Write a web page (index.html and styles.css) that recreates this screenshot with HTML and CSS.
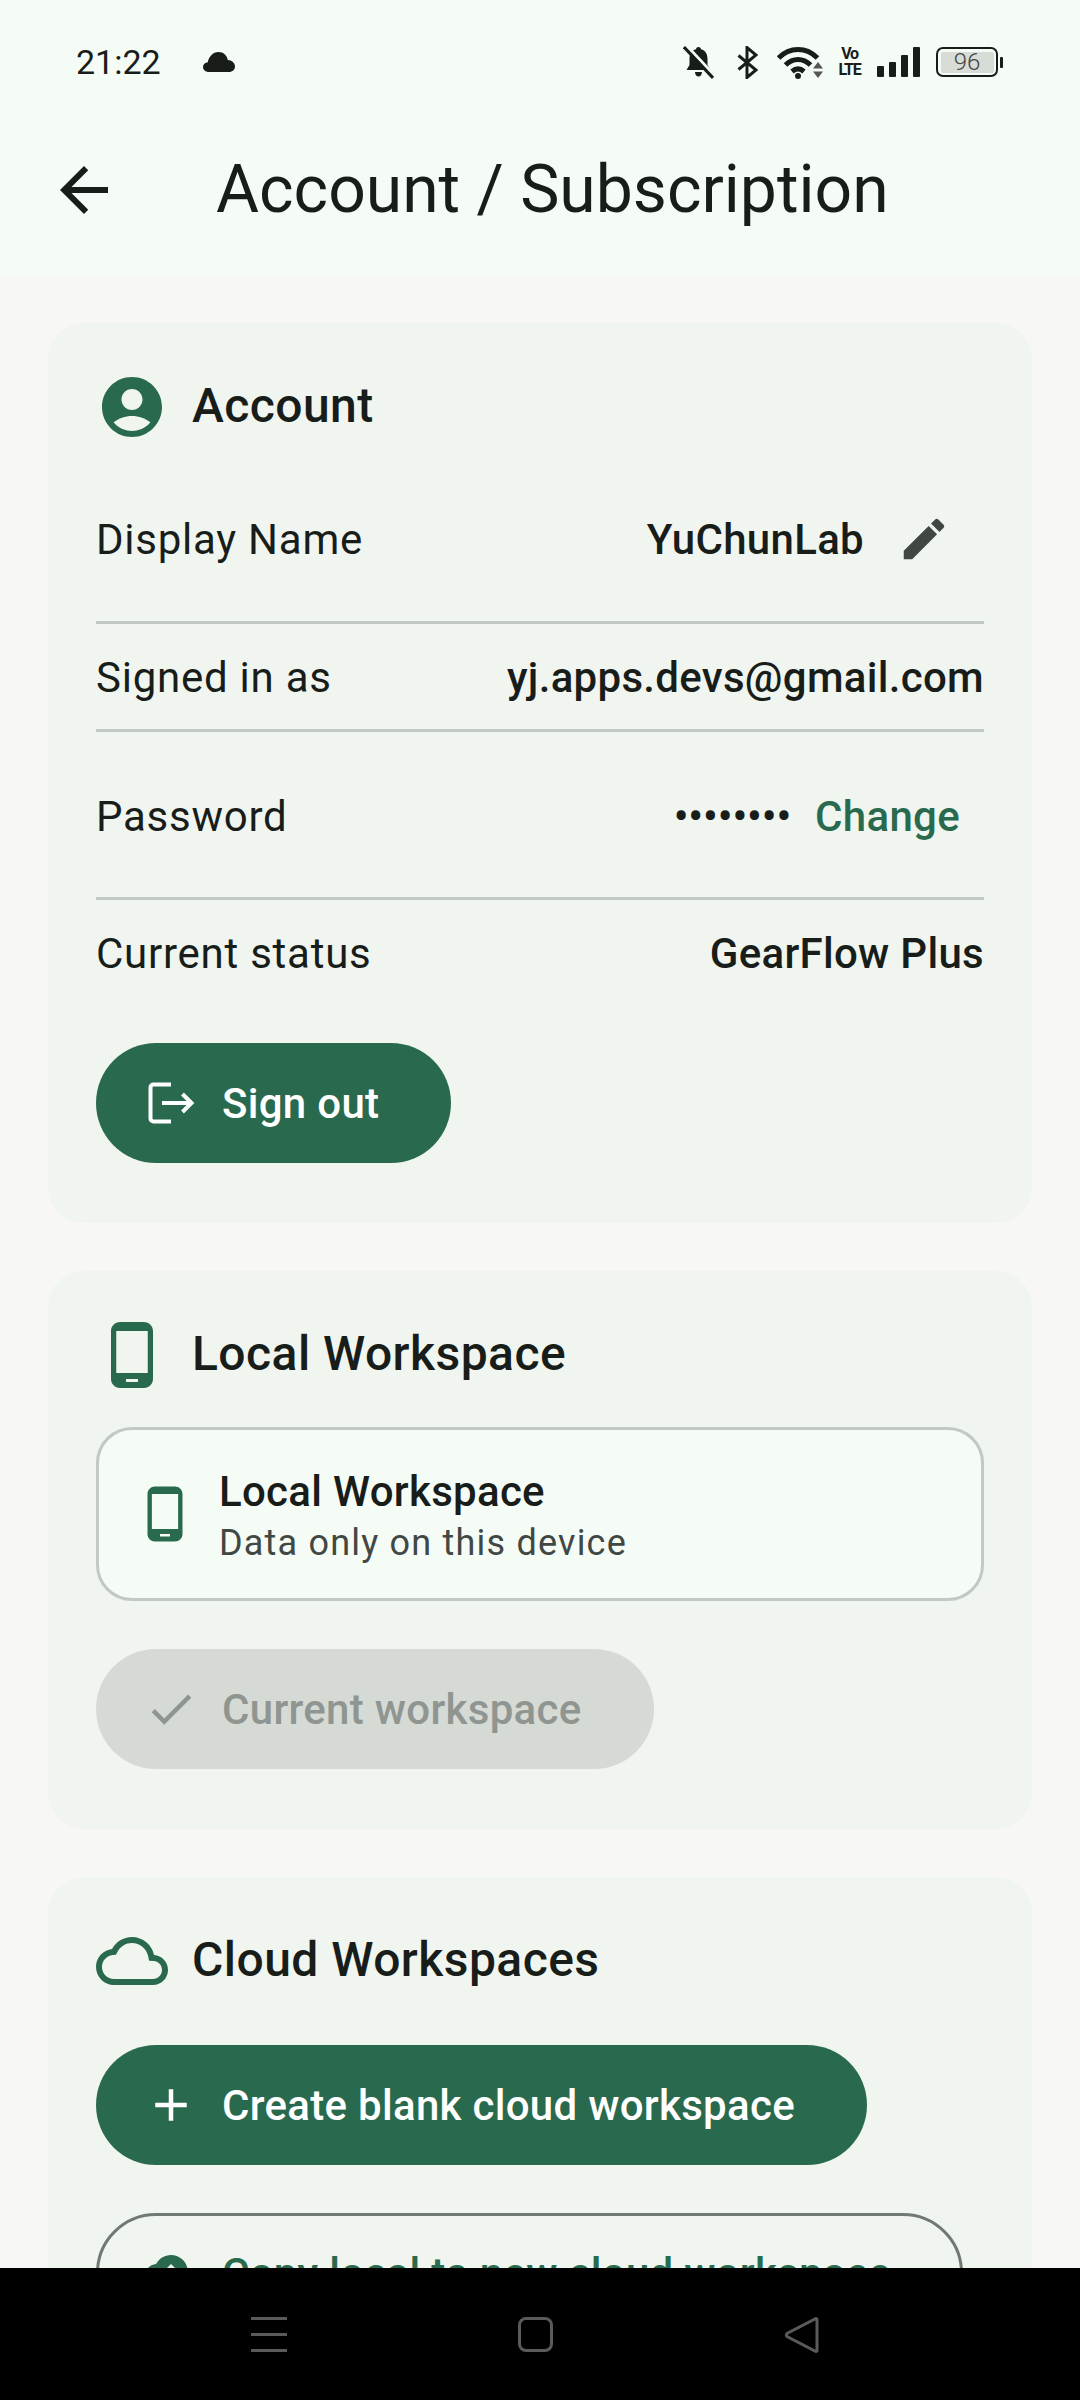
FILE: index.html
```html
<!DOCTYPE html>
<html lang="en">
<head>
<meta charset="utf-8">
<title>Account / Subscription</title>
<link rel="stylesheet" href="styles.css">
</head>
<body>
<div class="screen">
  <header class="top">
    <div class="status">
      <div class="status-left">
        <span class="time">21:22</span>
        <svg class="st-cloud" viewBox="0 0 32 20"><path d="M6 20C2.600 20 0 17.800 0 15c0-2.500 2-4.400 4.800-4.800C5.600 5 9.800 0 15.500 0c5 0 8.500 3.500 9.300 8 4 .2 7.200 3 7.200 6.500 0 3-2.600 5.500-6 5.500z"/></svg>
      </div>
      <div class="status-right">
        <svg class="st-bell" viewBox="0 0 31 33"><path d="M15.500 1c1.500 0 2.500 1 2.500 2.300 4.500 1.100 6.500 5 6.500 9.700v6l3 5H3.500l3-5v-6c0-4.700 2-8.600 6.500-9.700C13 2 14 1 15.500 1zM12 26h7c0 2.500-1.500 4.500-3.500 4.500S12 28.500 12 26z"/><path class="st-slash-bg" d="M4 0l29 31"/><path class="st-slash" d="M1 1l29 31"/></svg>
        <svg class="st-bt" viewBox="0 0 21 33"><path d="M1.500 9.500L19 24 10 31.500V1.500L19 9 1.500 23.500"/></svg>
        <svg class="st-wifi" viewBox="0 0 49 34"><path class="arc" d="M1.500 13C12.500 1.500 29.500 1.500 40.500 13"/><path class="arc" d="M8.500 20C16 12.500 26 12.500 33.500 20"/><path class="arc" d="M15 26.500C19 23 23 23 27 26.500"/><circle cx="21" cy="31" r="3"/><path class="tri" d="M36 23.500L41 17l5 6.500zM36 26.500h10L41 33z"/></svg>
        <span class="st-volte"><span>Vo</span><span>LTE</span></span>
        <div class="st-signal"><i class="b1"></i><i class="b2"></i><i class="b3"></i><i class="b4"></i></div>
        <div class="st-batt"><div class="st-batt-body"><span>96</span></div><i></i></div>
      </div>
    </div>
    <div class="appbar">
      <svg class="ic72 back" viewBox="0 0 24 24"><path d="M20 11H7.830l5.590-5.590L12 4l-8 8 8 8 1.410-1.410L7.830 13H20v-2z"/></svg>
      <h1>Account / Subscription</h1>
    </div>
  </header>

  <main class="content">
    <section class="card">
      <div class="card-head spaced">
        <svg class="ic72 green" viewBox="0 0 24 24"><path d="M12 2C6.480 2 2 6.480 2 12s4.480 10 10 10 10-4.480 10-10S17.520 2 12 2zm0 4c1.930 0 3.500 1.570 3.500 3.500S13.930 13 12 13s-3.500-1.570-3.500-3.500S10.070 6 12 6zm0 14c-2.030 0-4.430-.82-6.140-2.880C7.550 15.800 9.680 15 12 15s4.450.8 6.140 2.120C16.430 19.180 14.030 20 12 20z"/></svg>
        <h2>Account</h2>
      </div>
      <div class="row tall">
        <span class="label">Display Name</span>
        <div class="value-group">
          <span class="value">YuChunLab</span>
          <span class="icon-btn"><svg class="ic54 grey" viewBox="0 0 24 24"><path d="M3 17.250V21h3.750L17.810 9.940l-3.750-3.750L3 17.250zM20.710 7.040c.39-.39.39-1.020 0-1.410l-2.340-2.340c-.39-.39-1.020-.39-1.410 0l-1.830 1.830 3.750 3.750 1.830-1.830z"/></svg></span>
        </div>
      </div>
      <div class="row">
        <span class="label">Signed in as</span>
        <span class="value">yj.apps.devs@gmail.com</span>
      </div>
      <div class="row tall">
        <span class="label">Password</span>
        <div class="value-group">
          <span class="value dots">••••••••</span>
          <span class="text-btn">Change</span>
        </div>
      </div>
      <div class="row last">
        <span class="label">Current status</span>
        <span class="value">GearFlow Plus</span>
      </div>
      <div class="btn primary signout">
        <svg class="ic54 stroke" viewBox="0 0 54 54"><path d="M27 8.500H9.500a3 3 0 0 0-3 3v31a3 3 0 0 0 3 3H27"/><path d="M18 27H47M38.500 18l9 9-9 9"/></svg>
        <span>Sign out</span>
      </div>
    </section>

    <section class="card">
      <div class="card-head">
        <svg class="ic72 green" viewBox="0 0 24 24"><path d="M16 1H8C6.340 1 5 2.340 5 4v16c0 1.660 1.340 3 3 3h8c1.660 0 3-1.340 3-3V4c0-1.660-1.340-3-3-3zm-2 20h-4v-1h4v1zm3.250-3H6.750V4h10.500v14z"/></svg>
        <h2>Local Workspace</h2>
      </div>
      <div class="ws-box">
        <svg class="ic60 green" viewBox="0 0 24 24"><path d="M16 1H8C6.340 1 5 2.340 5 4v16c0 1.660 1.340 3 3 3h8c1.660 0 3-1.340 3-3V4c0-1.660-1.340-3-3-3zm-2 20h-4v-1h4v1zm3.250-3H6.750V4h10.500v14z"/></svg>
        <div class="ws-text">
          <span class="ws-title">Local Workspace</span>
          <span class="ws-sub">Data only on this device</span>
        </div>
      </div>
      <div class="btn disabled">
        <svg class="ic54" viewBox="0 0 24 24"><path d="M9 16.170L4.830 12l-1.420 1.410L9 19 21 7l-1.410-1.410z"/></svg>
        <span>Current workspace</span>
      </div>
    </section>

    <section class="card">
      <div class="card-head">
        <svg class="ic72 green" viewBox="0 0 24 24"><path d="M19.350 10.040C18.670 6.590 15.640 4 12 4 9.110 4 6.600 5.640 5.350 8.040 2.340 8.360 0 10.910 0 14c0 3.310 2.690 6 6 6h13c2.760 0 5-2.240 5-5 0-2.640-2.050-4.780-4.650-4.960zM19 18H6c-2.210 0-4-1.790-4-4 0-2.050 1.530-3.760 3.560-3.970l1.070-.11.5-.95C8.080 7.140 9.940 6 12 6c2.620 0 4.880 1.860 5.390 4.430l.3 1.500 1.530.11c1.560.1 2.780 1.410 2.780 2.960 0 1.650-1.350 3-3 3z"/></svg>
        <h2>Cloud Workspaces</h2>
      </div>
      <div class="btn primary create">
        <svg class="ic54" viewBox="0 0 24 24"><path d="M19 13h-6v6h-2v-6H5v-2h6V5h2v6h6v2z"/></svg>
        <span>Create blank cloud workspace</span>
      </div>
      <div class="btn outline">
        <svg class="ic54 green" viewBox="0 0 24 24"><path d="M19.350 10.040C18.670 6.590 15.640 4 12 4 9.110 4 6.600 5.640 5.350 8.040 2.340 8.360 0 10.910 0 14c0 3.310 2.690 6 6 6h13c2.760 0 5-2.240 5-5 0-2.640-2.050-4.780-4.650-4.960zM14 13v4h-4v-4H7l5-5 5 5h-3z"/></svg>
        <span>Copy local to new cloud workspace</span>
      </div>
    </section>
  </main>

  <nav class="navbar">
    <div class="nav-menu"><i></i><i></i><i></i></div>
    <div class="nav-home"></div>
    <svg class="nav-back" viewBox="0 0 36 36"><path d="M33 2.500v31a1 1 0 0 1-1.700.7L3 19.500a2 2 0 0 1 0-3L31.300 1.800A1 1 0 0 1 33 2.500z"/></svg>
  </nav>
</div>
</body>
</html>
```

FILE: styles.css
```css
* { box-sizing: border-box; margin: 0; padding: 0; }
html, body { width: 1080px; height: 2400px; overflow: hidden; }
body { font-family: Roboto, "Noto Sans", sans-serif; background: #f7f7f5; color: #181d1a; }
.screen { width: 1080px; height: 2400px; display: flex; flex-direction: column; overflow: hidden; }

.top { flex: none; height: 275px; background: #f5fbf5; }
.status { height: 105px; padding: 19px 77px 0 76px; display: flex; justify-content: space-between; align-items: center; }
.status-left { display: flex; align-items: center; gap: 42px; }
.time { font-size: 34px; line-height: 40px; color: #181d1a; }
.st-cloud { width: 32px; height: 20px; fill: #181d1a; }
.status-right { display: flex; align-items: center; }
.st-bell { width: 31px; height: 33px; fill: #181d1a; margin-right: 23px; }
.st-slash { stroke: #181d1a; stroke-width: 3; fill: none; }
.st-slash-bg { stroke: #f5fbf5; stroke-width: 3; fill: none; }
.st-bt { width: 21px; height: 33px; fill: none; stroke: #181d1a; stroke-width: 3; margin-right: 19px; }
.st-wifi { width: 49px; height: 34px; fill: #181d1a; margin-right: 12px; }
.st-wifi .arc { fill: none; stroke: #181d1a; stroke-width: 5; }
.st-wifi .tri { fill: #555; }
.st-volte { width: 23px; display: flex; flex-direction: column; font-size: 16px; line-height: 16px; font-weight: 700; align-items: center; margin-right: 16px; letter-spacing: -1.200px; }
.st-signal { display: flex; align-items: flex-end; gap: 5px; height: 30px; margin-right: 16px; }
.st-signal i { display: block; width: 7px; background: #181d1a; border-radius: 1px; }
.st-signal .b1 { height: 11px; }
.st-signal .b2 { height: 15px; }
.st-signal .b3 { height: 22px; }
.st-signal .b4 { height: 30px; }
.st-batt { display: flex; align-items: center; gap: 2px; }
.st-batt-body { width: 62px; height: 30px; border: 2.500px solid #181d1a; border-radius: 7px; padding: 2.500px; }
.st-batt-body span { display: block; height: 100%; background: #d8dcd7; border-radius: 2px; font-size: 24px; line-height: 20px; text-align: center; color: #444; font-weight: 300; }
.st-batt i { display: block; width: 3px; height: 11px; background: #181d1a; border-radius: 1px; }

.appbar { height: 170px; display: flex; align-items: center; padding: 0 48px; gap: 96px; }
.appbar h1 { font-size: 66px; line-height: 84px; font-weight: 400; color: #181d1a; }
.ic72 { flex: none; width: 72px; height: 72px; fill: #181d1a; }
.ic60 { flex: none; width: 60px; height: 60px; }
.ic54 { flex: none; width: 54px; height: 54px; fill: currentColor; }
.ic72.green, .ic60.green, .ic54.green { fill: #296a4e; }
.ic54.grey { fill: #414844; }
.ic54.stroke { fill: none; stroke: currentColor; stroke-width: 4; }

.content { flex: 1; min-height: 0; overflow: hidden; padding: 48px 48px 0; display: flex; flex-direction: column; gap: 48px; }
.card { flex: none; background: #f0f5f0; border-radius: 36px; padding: 48px 48px 60px; display: flex; flex-direction: column; }
.card-head { display: flex; align-items: center; gap: 24px; height: 72px; }
.card-head.spaced { margin-bottom: 12px; }
.card-head h2 { font-size: 48px; line-height: 68px; padding-bottom: 3px; font-weight: 500; color: #181d1a; letter-spacing: .45px; }

.row { display: flex; justify-content: space-between; align-items: center; padding: 25px 0 23px; line-height: 57px; border-bottom: 3px solid #c1c9c2; }
.row.tall { padding: 24px 0 21px; }
.spaced + .row.tall { padding-bottom: 22px; }
.row.last { border-bottom: 0; padding-bottom: 23px; }
.label { font-size: 42px; letter-spacing: .75px; color: #181d1a; }
.value { font-size: 42px; font-weight: 500; letter-spacing: .3px; color: #181d1a; }
.value-group { display: flex; align-items: center; }
.icon-btn { width: 120px; height: 120px; display: flex; align-items: center; justify-content: center; }
.text-btn { height: 120px; padding: 0 24px; display: flex; align-items: center; font-size: 42px; font-weight: 500; color: #296a4e; letter-spacing: .3px; }
.value.dots { letter-spacing: 0; }

.btn { align-self: flex-start; height: 120px; border-radius: 60px; padding: 0 72px 0 48px; display: flex; align-items: center; gap: 24px; font-size: 42px; font-weight: 500; letter-spacing: .3px; white-space: nowrap; }
.primary { background: #296a4e; color: #fff; }
.signout { margin-top: 38px; }
.disabled { background: #d6dad5; color: #8f9590; margin-top: 48px; }
.create { margin-top: 48px; }
.outline { margin-top: 48px; border: 3px solid #717973; color: #296a4e; padding-left: 45px; padding-right: 69px; }

.ws-box { margin-top: 36px; height: 174px; background: #f5fbf5; border: 3px solid #c1c9c2; border-radius: 36px; padding: 0 36px; display: flex; align-items: center; gap: 24px; }
.ws-text { display: flex; flex-direction: column; padding-top: 3px; }
.ws-title { font-size: 42px; line-height: 54px; font-weight: 500; color: #181d1a; letter-spacing: .3px; }
.ws-sub { font-size: 36px; line-height: 48px; color: #414844; letter-spacing: 1.200px; }

.navbar { flex: none; height: 132px; background: #000; display: flex; justify-content: space-between; align-items: flex-start; padding: 49px 260px 0 251px; }
.nav-menu { width: 36px; height: 35px; display: flex; flex-direction: column; justify-content: space-between; }
.nav-menu i { display: block; height: 3px; background: #5a5a5a; }
.nav-home { width: 35px; height: 35px; border: 3px solid #5a5a5a; border-radius: 8px; }
.nav-back { width: 36px; height: 36px; fill: none; stroke: #5a5a5a; stroke-width: 3; }
```
